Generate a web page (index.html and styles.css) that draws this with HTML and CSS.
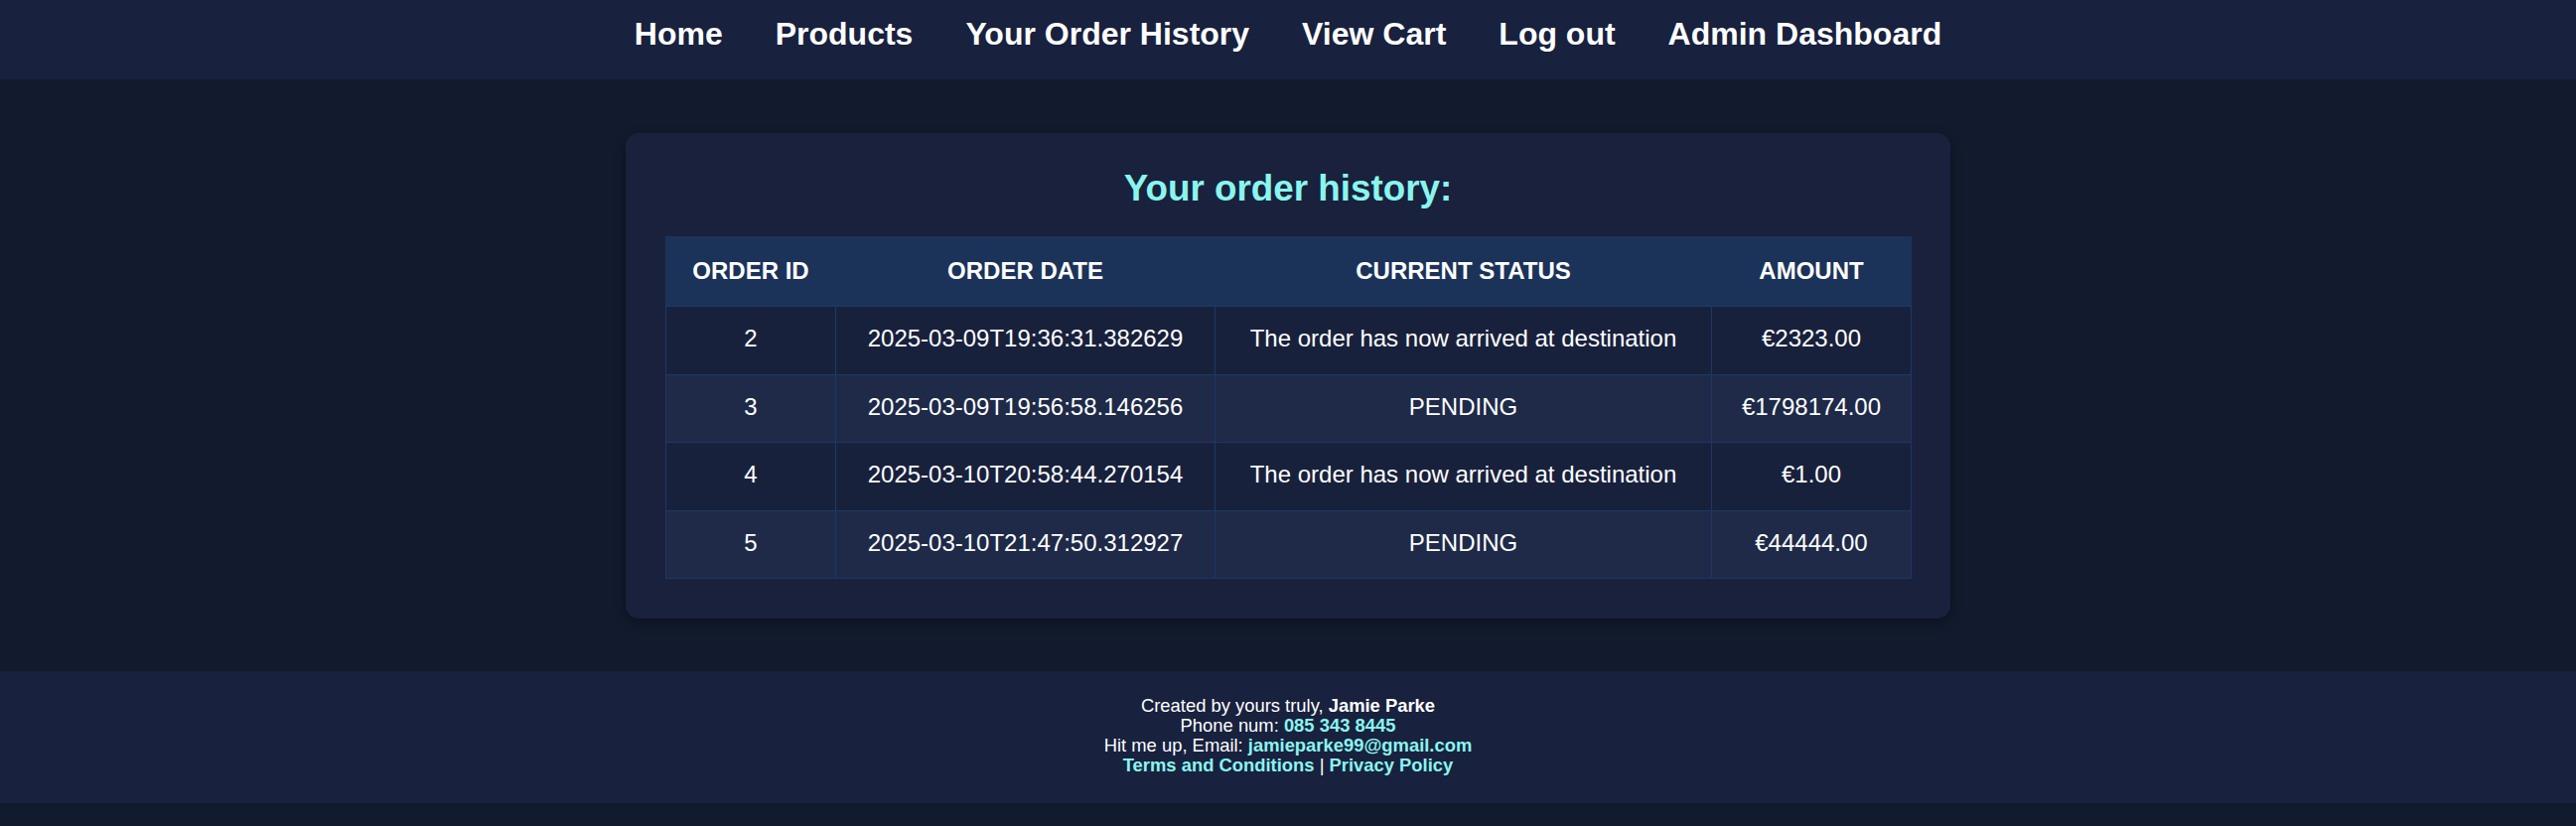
FILE: index.html
```html
<!DOCTYPE html>
<html lang="en">
<head>
<meta charset="utf-8">
<title>Your Order History</title>
<link rel="stylesheet" href="styles.css">
</head>
<body>
<nav class="topnav">
  <ul class="nav-list">
    <li><a class="nav-link" href="#">Home</a></li>
    <li><a class="nav-link" href="#">Products</a></li>
    <li><a class="nav-link" href="#">Your Order History</a></li>
    <li><a class="nav-link" href="#">View Cart</a></li>
    <li><a class="nav-link" href="#">Log out</a></li>
    <li><a class="nav-link" href="#">Admin Dashboard</a></li>
  </ul>
</nav>
<main class="main">
  <section class="card">
    <h2 class="card-title">Your order history:</h2>
    <table class="orders">
      <colgroup>
        <col class="c-id">
        <col class="c-date">
        <col class="c-status">
        <col class="c-amount">
      </colgroup>
      <thead>
        <tr><th>ORDER ID</th><th>ORDER DATE</th><th>CURRENT STATUS</th><th>AMOUNT</th></tr>
      </thead>
      <tbody>
        <tr><td>2</td><td>2025-03-09T19:36:31.382629</td><td>The order has now arrived at destination</td><td>€2323.00</td></tr>
        <tr><td>3</td><td>2025-03-09T19:56:58.146256</td><td>PENDING</td><td>€1798174.00</td></tr>
        <tr><td>4</td><td>2025-03-10T20:58:44.270154</td><td>The order has now arrived at destination</td><td>€1.00</td></tr>
        <tr><td>5</td><td>2025-03-10T21:47:50.312927</td><td>PENDING</td><td>€44444.00</td></tr>
      </tbody>
    </table>
  </section>
</main>
<footer class="footer">
  <div class="footer-line">Created by yours truly, <strong>Jamie Parke</strong></div>
  <div class="footer-line">Phone num: <a class="footer-link" href="#">085 343 8445</a></div>
  <div class="footer-line">Hit me up, Email: <a class="footer-link" href="#">jamieparke99@gmail.com</a></div>
  <div class="footer-line"><a class="footer-link" href="#">Terms and Conditions</a> | <a class="footer-link" href="#">Privacy Policy</a></div>
</footer>
</body>
</html>
```
FILE: styles.css
```css
html, body {
  margin: 0;
  padding: 0;
}
body {
  background: #121a2d;
  color: #ffffff;
  font-family: "Liberation Sans", Arial, Helvetica, sans-serif;
}

.topnav {
  background: #18213e;
  height: 80px;
  box-sizing: border-box;
  padding-top: 16px;
}
.nav-list {
  list-style: none;
  margin: 0;
  padding: 0;
  display: flex;
  justify-content: center;
  gap: 53px;
}
.nav-link {
  color: #ffffff;
  text-decoration: none;
  font-weight: 700;
  font-size: 32px;
  line-height: 37px;
  display: block;
}

.main {
  padding: 54px 0 53px;
  display: flex;
  justify-content: center;
}
.card {
  width: 1254px;
  padding: 35px 40px 40px;
  background: #19213d;
  border-radius: 13px;
  box-shadow: 0 4px 12px rgba(0, 0, 0, 0.35);
}
.card-title {
  margin: 0 0 27px;
  text-align: center;
  color: #89f6ee;
  font-size: 36.8px;
  line-height: 42px;
  font-weight: 700;
}

.orders {
  width: 1254px;
  table-layout: fixed;
  border-collapse: collapse;
  font-size: 24px;
}
.c-id { width: 171px; }
.c-date { width: 382px; }
.c-status { width: 500px; }
.c-amount { width: 201px; }

.orders th {
  background: #1c3359;
  color: #ffffff;
  font-weight: 700;
  line-height: 27px;
  padding: 20px 10px 22px;
  text-align: center;
  border: 1px solid #1c3359;
  border-bottom-color: #1d3a66;
}
.orders td {
  line-height: 27.5px;
  padding: 18px 10px 22px;
  text-align: center;
  border: 1px solid #1e3862;
  color: #ffffff;
  white-space: nowrap;
}
.orders tbody tr:nth-child(odd) td {
  background: #18213c;
}
.orders tbody tr:nth-child(even) td {
  background: #1e2a48;
}

.footer {
  background: #18213e;
  text-align: center;
  font-size: 18.4px;
  line-height: 20px;
  padding: 25px 0 28px;
  color: #ffffff;
}
.footer-line strong {
  font-weight: 700;
}
.footer-link {
  color: #89f6ee;
  font-weight: 700;
  text-decoration: none;
}
```
